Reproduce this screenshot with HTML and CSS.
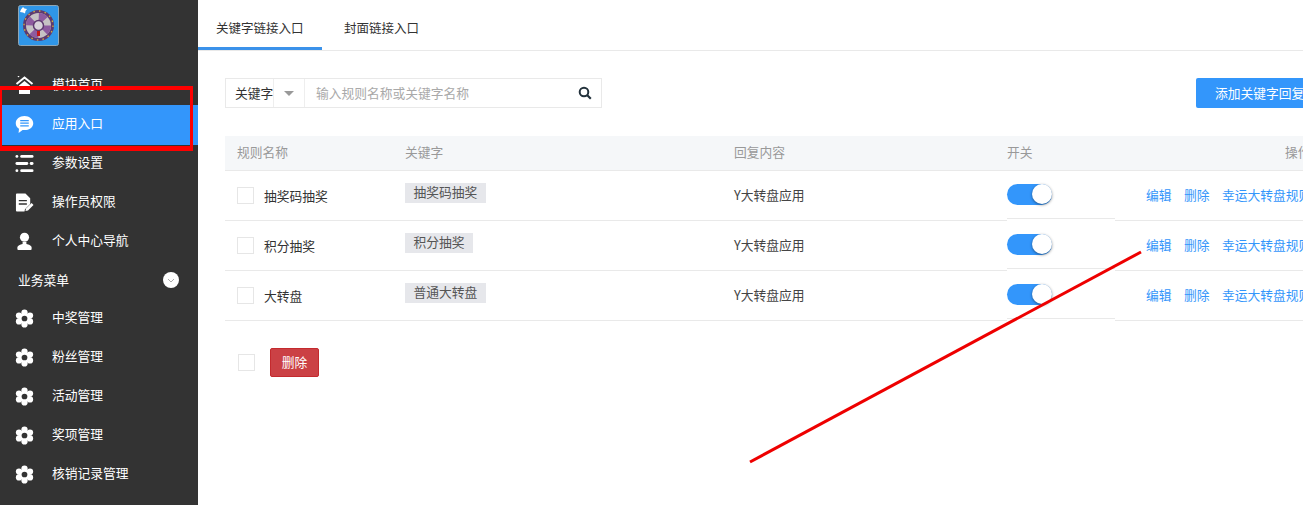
FILE: index.html
```html
<!DOCTYPE html>
<html lang="zh-CN">
<head>
<meta charset="utf-8">
<title>关键字链接入口</title>
<link rel="stylesheet" href="styles.css">
</head>
<body>
<div class="app">
  <aside class="sidebar">
    <div class="logo-wrap">
      <svg class="logo" viewBox="0 0 41 41">
        <rect x="0.500" y="0.500" width="40" height="40" rx="2" fill="#2f96e8" stroke="#8fa6b5" stroke-width="1"/>
        <path d="M5 2l1.500 1.500L9 4 7.500 6 7 8.500 5 7.500 2 7l1-2.500z" fill="#fff"/>
        <circle cx="20.500" cy="20.500" r="15.500" fill="#5e3a70"/>
        <circle cx="20.500" cy="20.500" r="14.500" fill="none" stroke="#d3b13f" stroke-width="1.300" stroke-dasharray="1.500 4.200"/>
        <circle cx="20.500" cy="20.500" r="12.500" fill="#c6c2c4"/>
        <circle cx="20.500" cy="20.500" r="8" fill="none" stroke="#8d5a9f" stroke-width="9" stroke-dasharray="6.280 6.290"/>
        <circle cx="20.500" cy="20.500" r="5" fill="#d8d2da" stroke="#5e3a70" stroke-width="1.500"/>
        <rect x="19" y="26" width="3" height="5" fill="#c01818"/>
      </svg>
    </div>
    <nav class="menu">
      <a class="item">
        <svg class="ico" viewBox="0 0 19 19"><path d="M1.500 8L9.500 1.500 17.500 8" fill="none" stroke="#fff" stroke-width="2"/><path d="M4 9.500L9.500 5l5.500 4.500V18H4z" fill="#fff"/><circle cx="3.500" cy="0.500" r=".8" fill="#fff"/></svg>
        <span>模块首页</span>
      </a>
      <a class="item active">
        <svg class="ico" viewBox="0 0 20 20"><path d="M10 1C4.800 1 .8 4.300.8 8.600c0 2.500 1.300 4.600 3.400 6l-.4 4.400 4.200-3.300c.6.100 1.300.2 2 .2 5.200 0 9.200-3.200 9.200-7.300S15.200 1 10 1z" fill="#fff"/><path d="M5.500 5.800h9M5.500 8.600h9M5.500 11.400h9" stroke="#3396fb" stroke-width="1.300"/></svg>
        <span>应用入口</span>
      </a>
      <a class="item">
        <svg class="ico" viewBox="0 0 20 20"><g fill="#fff"><rect x="0.500" y="1" width="3" height="3" rx="1.500"/><rect x="5.500" y="1" width="14" height="3" rx="1.500"/><rect x="0.500" y="8.500" width="13.500" height="3" rx="1.500"/><rect x="15.500" y="8.500" width="4" height="3" rx="1.500"/><rect x="0.500" y="16" width="3" height="3" rx="1.500"/><rect x="5.500" y="16" width="14" height="3" rx="1.500"/></g></svg>
        <span>参数设置</span>
      </a>
      <a class="item">
        <svg class="ico" viewBox="0 0 20 20"><path d="M2 .5h9l5 5v6l-5.500 5.500-.5 2.500H2a1 1 0 0 1-1-1v-17a1 1 0 0 1 1-1z" fill="#fff"/><path d="M4 8h8.500M4 11.500h8.500" stroke="#333" stroke-width="1.500"/><path d="M11 19l.6-2.800L17.500 10.500l2 2L13.700 18.300z" fill="#fff"/></svg>
        <span>操作员权限</span>
      </a>
      <a class="item">
        <svg class="ico" viewBox="0 0 20 20"><circle cx="10" cy="5.500" r="4.800" fill="#fff"/><path d="M8 10.500h4v2c2.500.6 5.500 1.700 5.500 3.500v2a1 1 0 0 1-1 1h-13a1 1 0 0 1-1-1v-2c0-1.800 3-2.900 5.500-3.500z" fill="#fff"/></svg>
        <span>个人中心导航</span>
      </a>
      <div class="heading">
        <span>业务菜单</span>
        <i class="heading-toggle"><svg viewBox="0 0 16 16"><path d="M5 7l3 3 3-3" fill="none" stroke="#aaa" stroke-width="1"/></svg></i>
      </div>
      <a class="item">
        <svg class="ico" viewBox="0 0 20 20"><use href="#gear"/></svg>
        <span>中奖管理</span>
      </a>
      <a class="item">
        <svg class="ico" viewBox="0 0 20 20"><use href="#gear"/></svg>
        <span>粉丝管理</span>
      </a>
      <a class="item">
        <svg class="ico" viewBox="0 0 20 20"><use href="#gear"/></svg>
        <span>活动管理</span>
      </a>
      <a class="item">
        <svg class="ico" viewBox="0 0 20 20"><use href="#gear"/></svg>
        <span>奖项管理</span>
      </a>
      <a class="item">
        <svg class="ico" viewBox="0 0 20 20"><use href="#gear"/></svg>
        <span>核销记录管理</span>
      </a>
    </nav>
    <svg class="defs" width="0" height="0">
      <defs>
        <g id="gear">
          <g fill="#fff">
            <circle cx="10" cy="3.800" r="3.300"/>
            <circle cx="10" cy="16.200" r="3.300"/>
            <circle cx="4.200" cy="6.900" r="3.300"/>
            <circle cx="15.800" cy="6.900" r="3.300"/>
            <circle cx="4.200" cy="13.100" r="3.300"/>
            <circle cx="15.800" cy="13.100" r="3.300"/>
            <circle cx="10" cy="10" r="6"/>
          </g>
          <circle cx="10" cy="10" r="3" fill="#333"/>
        </g>
      </defs>
    </svg>
  </aside>

  <main class="main">
    <div class="tabs">
      <a class="tab tab-active">关键字链接入口</a>
      <a class="tab">封面链接入口</a>
    </div>
    <div class="content">
      <div class="toolbar">
        <div class="search">
          <span class="search-type">关键字</span>
          <span class="search-caret"><i></i></span>
          <span class="search-input">输入规则名称或关键字名称</span>
          <span class="search-btn">
            <svg viewBox="0 0 14 14" width="14" height="14"><circle cx="6" cy="6" r="4.300" fill="none" stroke="#23323c" stroke-width="2"/><path d="M9 9l3.800 3.800" stroke="#23323c" stroke-width="2.200"/></svg>
          </span>
        </div>
        <a class="add-btn">添加关键字回复</a>
      </div>

      <div class="table">
        <div class="row head">
          <div class="c-name"><span>规则名称</span></div>
          <div class="c-key">关键字</div>
          <div class="c-reply">回复内容</div>
          <div class="c-switch">开关</div>
          <div class="c-op c-op-head">操作</div>
        </div>

        <div class="row">
          <div class="c-name"><i class="check"></i><span class="name">抽奖码抽奖</span></div>
          <div class="c-key"><span class="tag">抽奖码抽奖</span></div>
          <div class="c-reply">Y大转盘应用</div>
          <div class="c-switch"><i class="switch"></i></div>
          <div class="c-op"><a>编辑</a><a>删除</a><a>幸运大转盘规则</a></div>
        </div>
        <div class="row">
          <div class="c-name"><i class="check"></i><span class="name">积分抽奖</span></div>
          <div class="c-key"><span class="tag">积分抽奖</span></div>
          <div class="c-reply">Y大转盘应用</div>
          <div class="c-switch"><i class="switch"></i></div>
          <div class="c-op"><a>编辑</a><a>删除</a><a>幸运大转盘规则</a></div>
        </div>
        <div class="row">
          <div class="c-name"><i class="check"></i><span class="name">大转盘</span></div>
          <div class="c-key"><span class="tag">普通大转盘</span></div>
          <div class="c-reply">Y大转盘应用</div>
          <div class="c-switch"><i class="switch"></i></div>
          <div class="c-op"><a>编辑</a><a>删除</a><a>幸运大转盘规则</a></div>
        </div>
      </div>

      <div class="bulk">
        <i class="check"></i>
        <a class="del-btn">删除</a>
      </div>
    </div>
  </main>
</div>

<div class="mark-box"></div>
<svg class="mark-line" viewBox="0 0 1303 505" width="1303" height="505"><path d="M750 462L1141 252" stroke="#ee0000" stroke-width="3" fill="none"/></svg>
</body>
</html>
```
FILE: styles.css
```css
* { box-sizing: border-box; }
html, body { margin: 0; height: 100%; overflow: hidden; background: #fff; }
body { font: 12.750px/1.4 "Noto Sans CJK SC", "Liberation Sans", sans-serif; color: #333; }
a { text-decoration: none; color: inherit; }
i { font-style: normal; display: block; }

.app { display: flex; width: 1303px; height: 505px; overflow: hidden; }

/* sidebar */
.sidebar { flex: 0 0 198px; background: #333; color: #fff; }
.logo-wrap { height: 65px; padding: 5px 0 0 18px; }
.logo { display: block; width: 41px; height: 41px; }
.item { display: flex; align-items: center; height: 39px; padding-left: 15px; }
.item span { margin: 0 0 2px 18px; }
.ico { flex: 0 0 19px; width: 19px; height: 19px; display: block; margin-top: 2px; }
.active { background: #3396fb; height: 40px; margin: 1px 0 -2px; padding-bottom: 3px; }
.heading { display: flex; align-items: center; justify-content: space-between; height: 38px; padding: 2px 19px 0 18px; }
.heading-toggle { width: 16px; height: 16px; border-radius: 50%; background: #fff; }
.heading-toggle svg { display: block; }
.defs { position: absolute; }

/* main */
.main { flex: 1 1 auto; min-width: 0; overflow: hidden; }
.tabs { display: flex; height: 51px; border-bottom: 1px solid #e9e9e9; }
.tab { display: flex; align-items: center; height: 50px; padding: 6px 18px 0; font-size: 12.500px; color: #333; }
.tab + .tab { padding-left: 22px; }
.tab-active { border-bottom: 3px solid #3b92ea; padding-top: 9px; width: 124px; }
.content { width: 1130px; margin-left: 27px; padding-top: 27px; }

.toolbar { display: flex; justify-content: space-between; align-items: flex-start; height: 58px; }
.search { display: flex; width: 377px; height: 30px; border: 1px solid #e9e9e9; align-items: center; }
.search-type { width: 47px; padding: 0 0 1px 9px; color: #333; white-space: nowrap; }
.search-caret { width: 32px; height: 28px; border-left: 1px solid #eee; border-right: 1px solid #eee; display: flex; align-items: center; justify-content: center; }
.search-caret i { width: 0; height: 0; border: 5px solid transparent; border-top: 5px solid #999; border-bottom: 0; }
.search-input { flex: 1; padding-left: 11px; color: #a9a9a9; }
.search-btn { width: 32px; display: flex; align-items: center; justify-content: center; }
.search-btn svg { display: block; }

.add-btn { display: block; width: 159px; height: 30px; line-height: 30px; padding-left: 19px; background: #3396fb; color: #fff; border-radius: 2px; border: 0; }

.table { width: 1130px; }
.row { display: flex; height: 50px; align-items: center; border-bottom: 1px solid #e9e9e9; padding-bottom: 1px; }
.head { height: 35px; background: #f5f7f9; color: #999; padding-bottom: 2px; }
.c-name { flex: 0 0 168px; padding-left: 12px; display: flex; align-items: center; }
.c-key { flex: 0 0 329px; padding-left: 12px; }
.c-reply { flex: 0 0 273px; padding-left: 12px; color: #444; }
.c-switch { position: relative; flex: 0 0 139px; padding-left: 12px; }
.row:not(.head) .c-switch { align-self: stretch; display: flex; align-items: center; }
.row:not(.head) .c-switch::after { content: ""; position: absolute; left: 12px; bottom: -2px; width: 108px; height: 2px; border-top: 1px solid #e9e9e9; background: #fff; }
.c-op { flex: 1; white-space: nowrap; color: #3396fb; padding-left: 12px; }
.c-op a { margin-right: 12.500px; }
.c-op-head { padding-left: 151px; color: #999; }
.head .c-reply { color: #999; }

.check { flex: 0 0 17px; width: 17px; height: 17px; border: 1px solid #e6e6e6; background: #fff; }
.name { margin: 2px 0 0 10px; color: #333; }
.tag { display: inline-block; height: 20px; line-height: 18px; padding: 0 8.500px; background: #e6e7eb; color: #555; position: relative; top: -2px; }

.switch { position: relative; width: 45px; height: 21px; margin-top: -2px; border-radius: 11px; background: #3396fb; }
.switch::after { content: ""; position: absolute; right: 0; top: 0; width: 20px; height: 20px; border-radius: 50%; background: #fff; box-shadow: 0 1px 3px rgba(0,0,0,.45); }

.bulk { display: flex; align-items: flex-start; padding: 27px 0 0 13px; }
.bulk .check { margin-top: 6px; }
.del-btn { display: block; margin-left: 15px; width: 49px; height: 29px; line-height: 25px; text-align: center; color: #fff; background: #cb4145; border: 1px solid #c42a2e; border-radius: 2px; }

/* annotations drawn over the screenshot */
.mark-box { position: absolute; left: 0; top: 86px; width: 193px; height: 65px; border-style: solid; border-color: #f00; border-width: 4px 3px 5px 2px; }
.mark-line { position: absolute; left: 0; top: 0; pointer-events: none; }
```
